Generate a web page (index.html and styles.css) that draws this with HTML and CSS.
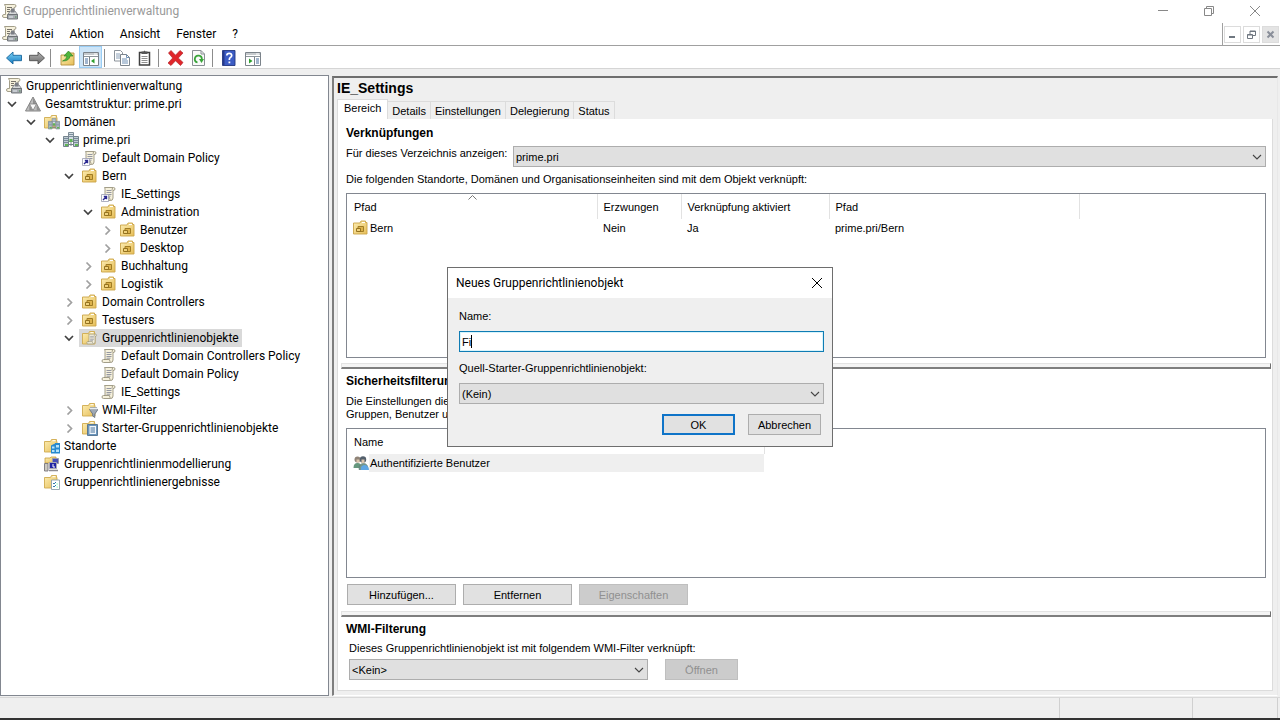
FILE: index.html
```html
<!DOCTYPE html>
<html lang="de">
<head>
    <meta charset="UTF-8">
    <meta name="viewport" content="width=device-width, initial-scale=1.0">
    <title>Gruppenrichtlinienverwaltung</title>
    <link rel="stylesheet" href="styles.css">
</head>
<body>
    <!-- Icon definitions -->
    <svg class="sprite" aria-hidden="true">
        <defs>
            <linearGradient id="g-folder" x1="0" y1="0" x2="1" y2="1">
                <stop offset="0" stop-color="#fdeeb4"/>
                <stop offset="1" stop-color="#e6be58"/>
            </linearGradient>
            <linearGradient id="g-blue" x1="0" y1="0" x2="0" y2="1">
                <stop offset="0" stop-color="#7fd4f5"/>
                <stop offset="1" stop-color="#1479c0"/>
            </linearGradient>
            <linearGradient id="g-gray" x1="0" y1="0" x2="0" y2="1">
                <stop offset="0" stop-color="#b4b4b4"/>
                <stop offset="1" stop-color="#6c6c6c"/>
            </linearGradient>
        </defs>
        <symbol id="i-scroll" viewBox="0 0 16 16">
            <path d="M3.500 1.500h9q1.500 0 1.500 1.500t-2 1.500v7.500q0 2.500-2.500 2.500h-7q-1.500 0-1.500-1.500t1.500-1.500h1.500v-8q0-2-.5-2z" fill="#f6f1dc" stroke="#98937e" stroke-width=".9"/>
            <path d="M12 4.500q-1.500-1-.5-2.500M3 11.500h5.500q0 2 1.500 3" fill="none" stroke="#98937e" stroke-width=".9"/>
            <path d="M5.500 4.500h5M5.500 6.500h5M5.500 8.500h5M5.500 10.200h4" stroke="#8a8d9c" stroke-width=".9"/>
        </symbol>
        <symbol id="i-gpm" viewBox="0 0 16 16">
            <path d="M2.500 .5h10q1.500 0 1.500 1.500t-2 1.500v7H8l-1 3H2q-1.500 0-1.500-1.500T2 10.500h1.500v-8z" fill="#f6f1dc" stroke="#98937e" stroke-width=".9"/>
            <path d="M5 3.500h5M5 5.500h3M5 7.500h3" stroke="#77736a"/>
            <path d="M6 10.500l2-3.500h5l2.500 3.500z" fill="#d6d8da" stroke="#74777b" stroke-width=".8"/>
            <path d="M9 4.500h3.500v4H9z" fill="#7c7f86"/>
            <path d="M5.500 10.500h10v4.500h-10z" fill="#a7abb0" stroke="#6a6e73" stroke-width=".9"/>
            <path d="M7 13h4" stroke="#e7ecf2"/><path d="M13 13h1.500" stroke="#4c8b53"/>
        </symbol>
        <symbol id="i-forest" viewBox="0 0 16 16">
            <path d="M8 1L15.500 15H.5z" fill="#bdbdbd" stroke="#858585"/>
            <path d="M8 1.500V8h3.300zM4.300 8.500V14.500H7.600zM11.700 8.500v6h3.200z" fill="#909090"/>
            <path d="M4.500 8h7L8 14.500z" fill="#fafafa" stroke="#808080" stroke-width=".8"/>
        </symbol>
        <symbol id="i-folder" viewBox="0 0 16 16">
            <path d="M.5 3.500h6l1-2h5v2h.5v10.500H.5z" fill="url(#g-folder)" stroke="#cfaa4e" stroke-width=".9"/>
            <path d="M8.500 2.700h3" stroke="#fff"/>
        </symbol>
        <symbol id="i-servers" viewBox="0 0 16 16">
            <path d="M5.500 .5h5v9h-5z" fill="#d3dce2" stroke="#7f8d96"/>
            <path d="M.5 4.500h5v10h-5zM10.500 4.500h5v10h-5z" fill="#c0ccd4" stroke="#74838d"/>
            <path d="M6 2.500h4M6 4.500h4M1 6.500h4M1 8.500h4M11 6.500h4M11 8.500h4M1 10.500h4M11 10.500h4" stroke="#65798a" stroke-width=".8"/>
            <path d="M6.500 7h3v3h-3zM2 12h3v2H2zM12 12h3v2h-3z" fill="#5fb553"/>
            <path d="M8 10v4M5.500 12.500h5" stroke="#74828c"/>
        </symbol>
        <symbol id="i-domains" viewBox="0 0 16 16">
            <use href="#i-folder"/>
            <use href="#i-servers" x="4" y="4" width="12" height="12"/>
        </symbol>
        <symbol id="i-link" viewBox="0 0 16 16">
            <use href="#i-scroll"/>
            <path d="M.5 8.500h7v7h-7z" fill="#fff" stroke="#9a9db0" stroke-width=".8"/>
            <path d="M2 14l3-3M2.800 10.500h2.700v2.700" fill="none" stroke="#2b2890" stroke-width="1.400"/>
        </symbol>
        <symbol id="i-ou" viewBox="0 0 16 16">
            <path d="M.5 3h6.500l1-2h4.500v1.500h1.500V14H.5z" fill="url(#g-folder)" stroke="#cba447" stroke-width=".9"/>
            <path d="M9 2.500h3" stroke="#fff"/>
            <path d="M5 6.500h5.500v5H5z" fill="#dcb24c" stroke="#a07c24"/>
            <path d="M3.500 8.500h4v3h-4z" fill="#f0d27c" stroke="#8c6a17" stroke-width=".9"/>
        </symbol>
        <symbol id="i-gpos" viewBox="0 0 16 16">
            <use href="#i-folder"/>
            <use href="#i-scroll" x="4" y="3" width="12" height="12"/>
        </symbol>
        <symbol id="i-wmi" viewBox="0 0 16 16">
            <use href="#i-folder"/>
            <path d="M7.500 7.500H16L12.800 12v3.500L10.700 14v-2z" fill="#9fa9b5" stroke="#5f6a78" stroke-width=".8"/>
            <path d="M8 6.500h7.500" stroke="#e7edf2" stroke-width="2"/><path d="M8 5.500h7" stroke="#8d99a6" stroke-width=".7"/>
        </symbol>
        <symbol id="i-starter" viewBox="0 0 16 16">
            <use href="#i-folder"/>
            <path d="M5.500 4.500h10v11h-10z" fill="#6b96bd" stroke="#50708f" stroke-width=".9"/>
            <path d="M7.500 6h6.500v8h-6.500z" fill="#f3f7fb"/>
            <path d="M8.500 8h4.500M8.500 10h4.500M8.500 12h4.500" stroke="#45719b"/>
        </symbol>
        <symbol id="i-sites" viewBox="0 0 16 16">
            <use href="#i-folder"/>
            <path d="M7 7.500l4-2v10H7zM11 5h5v10.500h-5z" fill="#2789cf"/>
            <path d="M8 8.500h2.500v2H8zM8 12h2.500v2H8zM12 7h3v2.500h-3zM12 11.500h3V14h-3z" fill="#b5e3fb"/>
        </symbol>
        <symbol id="i-model" viewBox="0 0 16 16">
            <path d="M1 2h5l1-1h5v6H1z" fill="url(#g-folder)" stroke="#c79f3e" stroke-width=".8"/>
            <path d="M8.500 2.500h6v5h-6z" fill="#484fb8" stroke="#9a9ca8"/>
            <path d="M.5 7.500h3.500v7.500H.5z" fill="#ccc9c0" stroke="#77757a" stroke-width=".9"/>
            <path d="M5.500 6.500h7v6h-7z" fill="#2326a3" stroke="#aaa9b4"/>
            <path d="M5 14.500h9" stroke="#8d8b90" stroke-width="1.500"/>
            <path d="M9 8v3h2" fill="none" stroke="#fff"/>
        </symbol>
        <symbol id="i-results" viewBox="0 0 16 16">
            <use href="#i-folder"/>
            <path d="M7.500 6h8v9.500h-8z" fill="#fff" stroke="#8fa0aa" stroke-width=".9"/>
            <path d="M9 9l1 1 2-2M9 12l1 1 2-2" fill="none" stroke="#2f7ba8"/><path d="M12.500 10H14M12.500 13H14" stroke="#8fb"/>
        </symbol>
        <symbol id="i-users" viewBox="0 0 16 16">
            <path d="M.5 13q0-5 4-5t4 5z" fill="#66977d"/>
            <circle cx="4.500" cy="4.500" r="3" fill="#8f8377"/><path d="M3.500 4.500h3v3h-3z" fill="#dcc7ae"/>
            <path d="M6 14.500q0-6 4.500-6t4.500 6z" fill="#77988a" stroke="#5d7d76" stroke-width=".7"/>
            <circle cx="10" cy="4.500" r="3.200" fill="#54606c"/><path d="M8.500 4.500h3v3.500h-3z" fill="#dcc7ae"/>
            <path d="M8 15q-1-4 3-5 4.500 0 5 5z" fill="#5fa7e4"/>
        </symbol>
        <symbol id="i-back" viewBox="0 0 16 16">
            <path d="M.5 8L7 2v3.300h8.500v5.400H7V14z" fill="url(#g-blue)" stroke="#17659c" stroke-width=".9"/>
        </symbol>
        <symbol id="i-forward" viewBox="0 0 16 16">
            <path d="M15.500 8L9 2v3.300H.5v5.400H9V14z" fill="url(#g-gray)" stroke="#505050" stroke-width=".9"/>
        </symbol>
        <symbol id="i-up" viewBox="0 0 16 16">
            <path d="M1 5h5l1-2h7v12H1z" fill="url(#g-folder)" stroke="#b48f3a" stroke-width=".9"/>
            <path d="M2.500 11q4-1 4.500-5H4l4.500-5 4.500 5h-3Q9.500 11 2.500 11z" fill="#4fb63c" stroke="#2c8524" stroke-width=".7"/>
        </symbol>
        <symbol id="i-tree" viewBox="0 0 16 16">
            <path d="M.5 2.500h15v13H.5z" fill="#fff" stroke="#7b838a"/>
            <path d="M1 4h14M1 6.500h14" stroke="#8d959b"/><path d="M11 4h3" stroke="#fff"/>
            <path d="M6.500 7v8" stroke="#7b838a"/>
            <path d="M2 9h3M2 11h3M2 13h3" stroke="#456d9c"/>
            <path d="M11.500 8.500v5L8 11z" fill="#2ea02e"/>
        </symbol>
        <symbol id="i-pane" viewBox="0 0 16 16">
            <path d="M.5 2.500h15v13H.5z" fill="#fff" stroke="#7b838a"/>
            <path d="M1 4h14M1 6.500h14" stroke="#8d959b"/><path d="M11 4h3" stroke="#fff"/>
            <path d="M9.500 7v8" stroke="#7b838a"/>
            <path d="M11 9h3M11 11h3M11 13h3" stroke="#456d9c"/>
            <path d="M4 8.500v5L7.500 11z" fill="#2ea02e"/>
        </symbol>
        <symbol id="i-copy" viewBox="0 0 16 16">
            <path d="M.5 .5h6l2 2v8.500h-8z" fill="#fff" stroke="#8b929a"/>
            <path d="M2 4h4M2 6h4M2 8h4" stroke="#8aa0b8"/>
            <path d="M6.500 4.500h6l3 3v8h-9z" fill="#fff" stroke="#7d858d"/>
            <path d="M12.500 4.500v3h3M8 9h5M8 11h6M8 13h6" fill="none" stroke="#7191b5"/>
        </symbol>
        <symbol id="i-paste" viewBox="0 0 16 16">
            <path d="M2.500 2.500h10v12.500h-10z" fill="#fff" stroke="#3f3f3f" stroke-width="1.500"/>
            <path d="M4.500 1.500h2L7.500 .5l1 1h2V4h-6z" fill="#555"/>
            <path d="M4.500 6.500h6M4.500 8.500h6M4.500 10.500h6M4.500 12.500h6" stroke="#909090"/>
        </symbol>
        <symbol id="i-delete" viewBox="0 0 16 16">
            <path d="M.5 3L3 .5 7.500 5.200 12 .5 15 3 10.300 8l4.700 4.500-2.500 3-5-4.700L3 15.500 0 13 4.700 8z" fill="#e0252a" stroke="#b3262b" stroke-width=".7"/>
        </symbol>
        <symbol id="i-refresh" viewBox="0 0 16 16">
            <path d="M1.500 .5h8.500l3.500 3.500v11.500h-12z" fill="#fafafa" stroke="#8a9095"/>
            <path d="M10 .5V4h3.500" fill="none" stroke="#8a9095"/>
            <path d="M6.500 12.500A3.500 3.500 0 1 1 10.800 9.500" fill="none" stroke="#3aa53a" stroke-width="1.800"/>
            <path d="M8 9h5l-2.500 4z" fill="#3aa53a"/>
        </symbol>
        <symbol id="i-help" viewBox="0 0 16 16">
            <path d="M.5 .5h12.500v15H.5z" fill="#3c5cc4" stroke="#23367f" stroke-width=".9"/>
            <path d="M1 1h1.500v14H1z" fill="#26398b"/>
            <path d="M4.800 5.500Q4.800 3.300 7.200 3.300T9.700 5.500Q9.700 6.800 8.300 7.600 7.300 8.200 7.300 10" fill="none" stroke="#fff" stroke-width="1.700"/>
            <path d="M6.500 11.500h1.800v1.800H6.500z" fill="#fff"/>
        </symbol>
        <symbol id="i-open" viewBox="0 0 10 10">
            <path d="M1 3l4 4 4-4" fill="none" stroke="#404040" stroke-width="1.700"/>
        </symbol>
        <symbol id="i-closed" viewBox="0 0 10 10">
            <path d="M3.500 1.500l4 4-4 4" fill="none" stroke="#a0a0a0" stroke-width="1.700"/>
        </symbol>
        <symbol id="i-drop" viewBox="0 0 10 10">
            <path d="M1 3l4 4 4-4" fill="none" stroke="#444" stroke-width="1.100"/>
        </symbol>
    </svg>

    <!-- Title bar -->
    <header class="titlebar">
        <svg class="icon"><use href="#i-gpm"/></svg>
        <h1>Gruppenrichtlinienverwaltung</h1>
        <div class="window-buttons">
            <button aria-label="Minimieren"><svg viewBox="0 0 12 12"><path d="M1 5.500h10"/></svg></button>
            <button aria-label="Wiederherstellen"><svg viewBox="0 0 12 12"><path d="M1.500 3.500h7v7h-7zM3.500 3.500v-2h7v7h-2"/></svg></button>
            <button aria-label="Schließen"><svg viewBox="0 0 12 12"><path d="M1 1l10 10M11 1L1 11"/></svg></button>
        </div>
    </header>

    <!-- Menu bar -->
    <nav class="menubar">
        <svg class="icon"><use href="#i-gpm"/></svg>
        <button>Datei</button>
        <button>Aktion</button>
        <button>Ansicht</button>
        <button>Fenster</button>
        <button>?</button>
        <div class="child-buttons">
            <button aria-label="Fenster minimieren"><svg viewBox="0 0 9 9"><path d="M1 7h6"/></svg></button>
            <button aria-label="Fenster wiederherstellen"><svg viewBox="0 0 9 9"><path class="thin" d="M.5 4.500h5v4h-5zM.5 5h5M3 4V1h5.500v4.500H6M3 1.500h5.500"/></svg></button>
            <button class="close" aria-label="Fenster schließen"><svg viewBox="0 0 9 9"><path d="M1.500 1.500l6 6M7.500 1.500l-6 6"/></svg></button>
        </div>
    </nav>

    <!-- Toolbar -->
    <div class="toolbar" role="toolbar">
        <button aria-label="Zurück"><svg class="icon"><use href="#i-back"/></svg></button>
        <button aria-label="Vorwärts"><svg class="icon"><use href="#i-forward"/></svg></button>
        <span class="sep"></span>
        <button aria-label="Aufwärts"><svg class="icon"><use href="#i-up"/></svg></button>
        <button class="active" aria-label="Konsolenstruktur"><svg class="icon"><use href="#i-tree"/></svg></button>
        <span class="sep"></span>
        <button aria-label="Kopieren"><svg class="icon"><use href="#i-copy"/></svg></button>
        <button aria-label="Einfügen"><svg class="icon"><use href="#i-paste"/></svg></button>
        <span class="sep"></span>
        <button aria-label="Löschen"><svg class="icon"><use href="#i-delete"/></svg></button>
        <button aria-label="Aktualisieren"><svg class="icon"><use href="#i-refresh"/></svg></button>
        <span class="sep"></span>
        <button aria-label="Hilfe"><svg class="icon"><use href="#i-help"/></svg></button>
        <button aria-label="Aktionsbereich"><svg class="icon"><use href="#i-pane"/></svg></button>
    </div>

    <div class="workspace">
        <!-- Console tree -->
        <aside class="tree">
            <div class="node root"><span class="label"><svg class="icon"><use href="#i-gpm"/></svg>Gruppenrichtlinienverwaltung</span></div>
            <ul>
                <li>
                    <div class="node"><button class="toggle" aria-label="Reduzieren"><svg><use href="#i-open"/></svg></button><span class="label"><svg class="icon"><use href="#i-forest"/></svg>Gesamtstruktur: prime.pri</span></div>
                    <ul>
                        <li>
                            <div class="node"><button class="toggle" aria-label="Reduzieren"><svg><use href="#i-open"/></svg></button><span class="label"><svg class="icon"><use href="#i-domains"/></svg>Domänen</span></div>
                            <ul>
                                <li>
                                    <div class="node"><button class="toggle" aria-label="Reduzieren"><svg><use href="#i-open"/></svg></button><span class="label"><svg class="icon"><use href="#i-servers"/></svg>prime.pri</span></div>
                                    <ul>
                                        <li><div class="node leaf"><span class="label"><svg class="icon"><use href="#i-link"/></svg>Default Domain Policy</span></div></li>
                                        <li>
                                            <div class="node"><button class="toggle" aria-label="Reduzieren"><svg><use href="#i-open"/></svg></button><span class="label"><svg class="icon"><use href="#i-ou"/></svg>Bern</span></div>
                                            <ul>
                                                <li><div class="node leaf"><span class="label"><svg class="icon"><use href="#i-link"/></svg>IE_Settings</span></div></li>
                                                <li>
                                                    <div class="node"><button class="toggle" aria-label="Reduzieren"><svg><use href="#i-open"/></svg></button><span class="label"><svg class="icon"><use href="#i-ou"/></svg>Administration</span></div>
                                                    <ul>
                                                        <li><div class="node"><button class="toggle" aria-label="Erweitern"><svg><use href="#i-closed"/></svg></button><span class="label"><svg class="icon"><use href="#i-ou"/></svg>Benutzer</span></div></li>
                                                        <li><div class="node"><button class="toggle" aria-label="Erweitern"><svg><use href="#i-closed"/></svg></button><span class="label"><svg class="icon"><use href="#i-ou"/></svg>Desktop</span></div></li>
                                                    </ul>
                                                </li>
                                                <li><div class="node"><button class="toggle" aria-label="Erweitern"><svg><use href="#i-closed"/></svg></button><span class="label"><svg class="icon"><use href="#i-ou"/></svg>Buchhaltung</span></div></li>
                                                <li><div class="node"><button class="toggle" aria-label="Erweitern"><svg><use href="#i-closed"/></svg></button><span class="label"><svg class="icon"><use href="#i-ou"/></svg>Logistik</span></div></li>
                                            </ul>
                                        </li>
                                        <li><div class="node"><button class="toggle" aria-label="Erweitern"><svg><use href="#i-closed"/></svg></button><span class="label"><svg class="icon"><use href="#i-ou"/></svg>Domain Controllers</span></div></li>
                                        <li><div class="node"><button class="toggle" aria-label="Erweitern"><svg><use href="#i-closed"/></svg></button><span class="label"><svg class="icon"><use href="#i-ou"/></svg>Testusers</span></div></li>
                                        <li>
                                            <div class="node selected"><button class="toggle" aria-label="Reduzieren"><svg><use href="#i-open"/></svg></button><span class="label"><svg class="icon"><use href="#i-gpos"/></svg>Gruppenrichtlinienobjekte</span></div>
                                            <ul>
                                                <li><div class="node leaf"><span class="label"><svg class="icon"><use href="#i-scroll"/></svg>Default Domain Controllers Policy</span></div></li>
                                                <li><div class="node leaf"><span class="label"><svg class="icon"><use href="#i-scroll"/></svg>Default Domain Policy</span></div></li>
                                                <li><div class="node leaf"><span class="label"><svg class="icon"><use href="#i-scroll"/></svg>IE_Settings</span></div></li>
                                            </ul>
                                        </li>
                                        <li><div class="node"><button class="toggle" aria-label="Erweitern"><svg><use href="#i-closed"/></svg></button><span class="label"><svg class="icon"><use href="#i-wmi"/></svg>WMI-Filter</span></div></li>
                                        <li><div class="node"><button class="toggle" aria-label="Erweitern"><svg><use href="#i-closed"/></svg></button><span class="label"><svg class="icon"><use href="#i-starter"/></svg>Starter-Gruppenrichtlinienobjekte</span></div></li>
                                    </ul>
                                </li>
                            </ul>
                        </li>
                        <li><div class="node leaf"><span class="label"><svg class="icon"><use href="#i-sites"/></svg>Standorte</span></div></li>
                        <li><div class="node leaf"><span class="label"><svg class="icon"><use href="#i-model"/></svg>Gruppenrichtlinienmodellierung</span></div></li>
                        <li><div class="node leaf"><span class="label"><svg class="icon"><use href="#i-results"/></svg>Gruppenrichtlinienergebnisse</span></div></li>
                    </ul>
                </li>
            </ul>
        </aside>

        <!-- Details of the selected policy -->
        <main class="details">
            <h2>IE_Settings</h2>
            <div class="tabs" role="tablist">
                <button class="tab current" role="tab" aria-selected="true">Bereich</button>
                <button class="tab" role="tab">Details</button>
                <button class="tab" role="tab">Einstellungen</button>
                <button class="tab" role="tab">Delegierung</button>
                <button class="tab" role="tab">Status</button>
            </div>
            <div class="panel">
                <section class="links">
                    <h3>Verknüpfungen</h3>
                    <div class="field">
                        <label for="directory">Für dieses Verzeichnis anzeigen:</label>
                        <div class="dropdown">
                            <select id="directory"><option>prime.pri</option></select>
                            <svg><use href="#i-drop"/></svg>
                        </div>
                    </div>
                    <p>Die folgenden Standorte, Domänen und Organisationseinheiten sind mit dem Objekt verknüpft:</p>
                    <div class="list">
                        <table>
                            <colgroup><col class="c-path"><col class="c-forced"><col class="c-enabled"><col class="c-path"><col></colgroup>
                            <thead>
                                <tr>
                                    <th>Pfad<svg class="sort" viewBox="0 0 9 5"><path d="M.5 4.500l4-4 4 4"/></svg></th>
                                    <th>Erzwungen</th>
                                    <th>Verknüpfung aktiviert</th>
                                    <th>Pfad</th>
                                    <th></th>
                                </tr>
                            </thead>
                            <tbody>
                                <tr>
                                    <td><span class="cell"><svg class="icon"><use href="#i-ou"/></svg>Bern</span></td>
                                    <td>Nein</td>
                                    <td>Ja</td>
                                    <td>prime.pri/Bern</td>
                                    <td></td>
                                </tr>
                            </tbody>
                        </table>
                    </div>
                </section>

                <div class="splitter"></div>

                <section class="security">
                    <h3>Sicherheitsfilterung</h3>
                    <p>Die Einstellungen dieses Gruppenrichtlinienobjekts gelten nur für die folgenden<br>Gruppen, Benutzer und Computer:</p>
                    <div class="list">
                        <table>
                            <colgroup><col class="c-name"><col></colgroup>
                            <thead>
                                <tr><th>Name</th><th></th></tr>
                            </thead>
                            <tbody>
                                <tr>
                                    <td class="marked"><span class="cell"><svg class="icon"><use href="#i-users"/></svg>Authentifizierte Benutzer</span></td>
                                    <td></td>
                                </tr>
                            </tbody>
                        </table>
                    </div>
                    <div class="buttons">
                        <button class="btn wide">Hinzufügen...</button>
                        <button class="btn wide">Entfernen</button>
                        <button class="btn wide" disabled>Eigenschaften</button>
                    </div>
                </section>

                <div class="splitter"></div>

                <section class="wmi">
                    <h3>WMI-Filterung</h3>
                    <label for="wmi-filter">Dieses Gruppenrichtlinienobjekt ist mit folgendem WMI-Filter verknüpft:</label>
                    <div class="wmi-row">
                        <div class="dropdown">
                            <select id="wmi-filter"><option>&lt;Kein&gt;</option></select>
                            <svg><use href="#i-drop"/></svg>
                        </div>
                        <button class="btn" disabled>Öffnen</button>
                    </div>
                </section>
            </div>
        </main>
    </div>

    <!-- Status bar -->
    <footer class="statusbar"><span></span><span></span><span></span></footer>

    <!-- New GPO dialog -->
    <div class="dialog" role="dialog" aria-labelledby="dialog-title">
        <div class="dialog-title">
            <h2 id="dialog-title">Neues Gruppenrichtlinienobjekt</h2>
            <button aria-label="Schließen"><svg viewBox="0 0 12 12"><path d="M1 1l10 10M11 1L1 11"/></svg></button>
        </div>
        <form class="dialog-body">
            <label for="gpo-name">Name:</label>
            <div class="textbox">
                <input type="text" id="gpo-name" value="Fi">
                <span class="caret"></span>
            </div>
            <label for="starter">Quell-Starter-Gruppenrichtlinienobjekt:</label>
            <div class="dropdown">
                <select id="starter"><option>(Kein)</option></select>
                <svg><use href="#i-drop"/></svg>
            </div>
            <div class="dialog-buttons">
                <button type="button" class="btn default">OK</button>
                <button type="button" class="btn">Abbrechen</button>
            </div>
        </form>
    </div>
</body>
</html>
```
FILE: styles.css
```css
/* Global Styles */
* {
    box-sizing: border-box;
}

body {
    margin: 0;
    height: 100vh;
    display: flex;
    flex-direction: column;
    overflow: hidden;
    background-color: #efefef;
    color: #000;
    font-family: Roboto, "Liberation Sans", sans-serif;
    font-size: 12px;
    line-height: 13px;
}

h1, h2, h3, p, ul {
    margin: 0;
    padding: 0;
}

button {
    margin: 0;
    padding: 0;
    border: none;
    background: none;
    color: inherit;
    font: inherit;
}

svg {
    display: block;
    flex: none;
}

.sprite {
    position: absolute;
    width: 0;
    height: 0;
}

.icon {
    width: 16px;
    height: 16px;
}

/* Title bar */
.titlebar {
    display: flex;
    align-items: center;
    flex: none;
    height: 23px;
    padding: 0 2px;
    background-color: #fff;
}

.titlebar h1 {
    margin-left: 5px;
    font-size: 12px;
    font-weight: normal;
    color: #999;
}

.window-buttons {
    display: flex;
    margin-left: auto;
}

.window-buttons button {
    display: grid;
    place-items: center;
    width: 46px;
    height: 23px;
    padding-bottom: 2px;
}

.window-buttons svg {
    width: 12px;
    height: 12px;
    fill: none;
    stroke: #888;
}

/* Menu bar */
.menubar {
    display: flex;
    align-items: center;
    flex: none;
    height: 23px;
    padding-left: 2px;
    background-color: #fff;
    border-bottom: 1px solid #a0a0a0;
}

.menubar > button {
    padding: 0 8px;
}

.child-buttons {
    display: flex;
    align-items: center;
    gap: 2px;
    align-self: stretch;
    margin-left: auto;
    padding: 0 1px;
    border-left: 1px solid #a0a0a0;
}

.child-buttons button {
    display: grid;
    place-items: center;
    width: 17px;
    height: 17px;
    border: 1px solid #dcdcdc;
}

.child-buttons .close {
    background-color: #e4e4e4;
}

.child-buttons svg {
    width: 9px;
    height: 9px;
    fill: none;
    stroke: #6f7780;
    stroke-width: 2;
}

.child-buttons .thin {
    stroke-width: 1;
}

.child-buttons .close svg {
    stroke: #8a8f9a;
}

/* Toolbar */
.toolbar {
    display: flex;
    flex: none;
    height: 23px;
    padding-left: 2px;
    background-color: #fff;
    border-bottom: 1px solid #d5d5d5;
}

.toolbar button {
    display: grid;
    place-items: center;
    width: 23px;
    padding-top: 2px;
}

.toolbar .active {
    background-color: #cce4f7;
    border: 1px solid #99cdf5;
    padding-top: 1px;
}

.sep {
    width: 8px;
    padding-left: 2px;
}

.sep::before {
    content: "";
    display: block;
    width: 1px;
    height: 18px;
    margin-top: 3px;
    background-color: #8c8c8c;
}

/* Workspace */
.workspace {
    display: flex;
    flex: 1;
    gap: 3px;
    min-height: 0;
    padding: 6px 2px 1px 0;
}

/* Console tree */
.tree {
    flex: none;
    width: 329px;
    padding-top: 1px;
    overflow: hidden;
    background-color: #fff;
    border: 1px solid #828790;
}

.tree ul {
    padding-left: 19px;
    list-style: none;
}

.tree > ul {
    padding-left: 6px;
}

.node {
    display: flex;
    height: 18px;
}

.node.root {
    padding-left: 2px;
}

.node.leaf {
    padding-left: 15px;
}

.toggle {
    width: 15px;
}

.toggle svg {
    width: 10px;
    height: 10px;
}

.label {
    display: flex;
    align-items: center;
    gap: 4px;
    padding: 0 3px;
    line-height: 18px;
    white-space: nowrap;
}

.selected .label {
    background-color: #d9d9d9;
}

/* Details pane */
.details {
    display: flex;
    flex-direction: column;
    flex: 1;
    min-width: 0;
    margin-top: 1px;
    padding: 2px 4px 4px 3px;
    border: 2px solid;
    border-color: #6e6e6e #e8e8e8 #fff #7e7e7e;
    border-right-width: 1px;
    border-bottom-width: 1px;
}

.details,
.dialog-body {
    font-family: "Liberation Sans", Arial, sans-serif;
    font-size: 11px;
}

.details h2 {
    margin-bottom: 3px;
    font-size: 14px;
    line-height: 16px;
}

.tabs {
    display: flex;
    align-items: flex-end;
}

.tab {
    height: 18px;
    padding: 1px 4px 0;
    border: 1px solid #dcdcdc;
    border-width: 1px 1px 0 0;
}

.tab.current {
    height: 20px;
    padding: 0 6px 2px;
    border-left-width: 1px;
    background-color: #fff;
}

.panel {
    display: flex;
    flex-direction: column;
    flex: 1;
    padding: 6px 1px 9px 3px;
    background-color: #fff;
    border: 1px solid #dcdcdc;
    border-top-width: 0;
}

.panel section {
    padding: 0 5px;
}

.panel h3 {
    font-size: 12px;
    line-height: 16px;
}

.field {
    display: flex;
    margin-top: 5px;
}

.field label {
    width: 167px;
    padding-top: 1px;
}

.dropdown {
    position: relative;
    flex: 1;
}

.dropdown select {
    appearance: none;
    display: block;
    width: 100%;
    height: 21px;
    padding: 1px 2px 0;
    border: 1px solid #adadad;
    border-radius: 0;
    background-color: #e0e0e0;
    color: #000;
    font: inherit;
}

.dropdown svg {
    position: absolute;
    top: 6px;
    right: 4px;
    width: 10px;
    height: 10px;
    pointer-events: none;
}

.links p {
    margin: 6px 0 7px;
}

.list {
    border: 1px solid #828790;
    background-color: #fff;
}

.links .list {
    height: 165px;
}

.security .list {
    height: 150px;
}

table {
    width: 100%;
    table-layout: fixed;
    border-collapse: collapse;
}

.c-path {
    width: 250px;
}

.c-forced {
    width: 84px;
}

.c-enabled {
    width: 148px;
}

.c-name {
    width: 417px;
}

th {
    position: relative;
    height: 25px;
    padding: 2px 6px 0;
    border-right: 1px solid #e2e2e2;
    font-weight: normal;
    text-align: left;
}

th:first-child {
    padding-left: 7px;
}

th:last-child {
    border-right: none;
}

.sort {
    position: absolute;
    top: 1px;
    left: 50%;
    width: 9px;
    height: 5px;
    margin-left: -4px;
    fill: none;
    stroke: #777;
}

td {
    height: 18px;
    padding: 0 6px;
}

.cell {
    display: flex;
    align-items: center;
    gap: 1px;
}

.marked {
    background: linear-gradient(to right, #fff 22px, #efefef 22px);
}

.splitter {
    flex: none;
    height: 6px;
    margin-top: 5px;
    background-color: #f4f4f4;
    border: 1px solid #e3e3e3;
    border-right: 1px solid #6e6e6e;
    border-bottom: 2px solid #7e7e7e;
}

.security h3, .wmi h3 {
    margin-top: 4px;
}

.security p {
    margin: 6px 0 7px;
}

.buttons {
    display: flex;
    gap: 7px;
    margin: 6px 1px;
}

.btn {
    width: 73px;
    height: 21px;
    padding-top: 1px;
    border: 1px solid #adadad;
    background-color: #e1e1e1;
}

.btn.wide {
    width: 109px;
}

.btn:disabled {
    border-color: #bfbfbf;
    background-color: #cccccc;
    color: #909090;
}

.btn.default {
    border: 2px solid #0f74c8;
}

.wmi label {
    display: block;
    margin: 5px 3px 4px;
}

.wmi-row {
    display: flex;
    gap: 17px;
    margin: 0 3px;
}

.wmi-row .dropdown {
    flex: 0 1 299px;
}

.security + .splitter {
    margin-top: 0;
}

/* Status bar */
.statusbar {
    display: flex;
    justify-content: flex-end;
    flex: none;
    height: 23px;
    padding-right: 2px;
    border-top: 1px solid #d8d8d8;
    border-bottom: 2px solid #333;
}

.statusbar span {
    width: 85px;
    border-right: 1px solid #d0d0d0;
}

.statusbar span:nth-child(2) {
    width: 133px;
}

/* Dialog */
.dialog {
    position: absolute;
    top: 267px;
    left: calc(50% - 193px);
    width: 386px;
    background-color: #efefef;
    border: 1px solid #6e6e6e;
}

.dialog-title {
    display: flex;
    align-items: center;
    justify-content: space-between;
    height: 30px;
    padding: 0 9px 0 8px;
    background-color: #fff;
}

.dialog-title h2 {
    font-size: 12px;
    font-weight: normal;
}

.dialog-title svg {
    width: 12px;
    height: 12px;
    fill: none;
    stroke: #000;
}

.dialog-body {
    padding: 12px 8px 11px 11px;
}

.dialog-body label {
    display: block;
}

.textbox {
    position: relative;
    margin: 8px 0 10px;
}

.textbox input {
    display: block;
    width: 100%;
    height: 21px;
    padding: 0 2px;
    border: 1px solid #0f7cb4;
    border-radius: 0;
    background-color: #fff;
    box-shadow: inset 0 0 0 1px #d8f4fb;
    color: #000;
    font: inherit;
    outline: none;
}

.caret {
    position: absolute;
    top: 4px;
    left: 12px;
    width: 1px;
    height: 13px;
    background-color: #000;
}

.dialog-body .dropdown {
    margin-top: 8px;
}

.dialog-buttons {
    display: flex;
    justify-content: flex-end;
    gap: 13px;
    margin: 10px 3px 0 0;
}
```
